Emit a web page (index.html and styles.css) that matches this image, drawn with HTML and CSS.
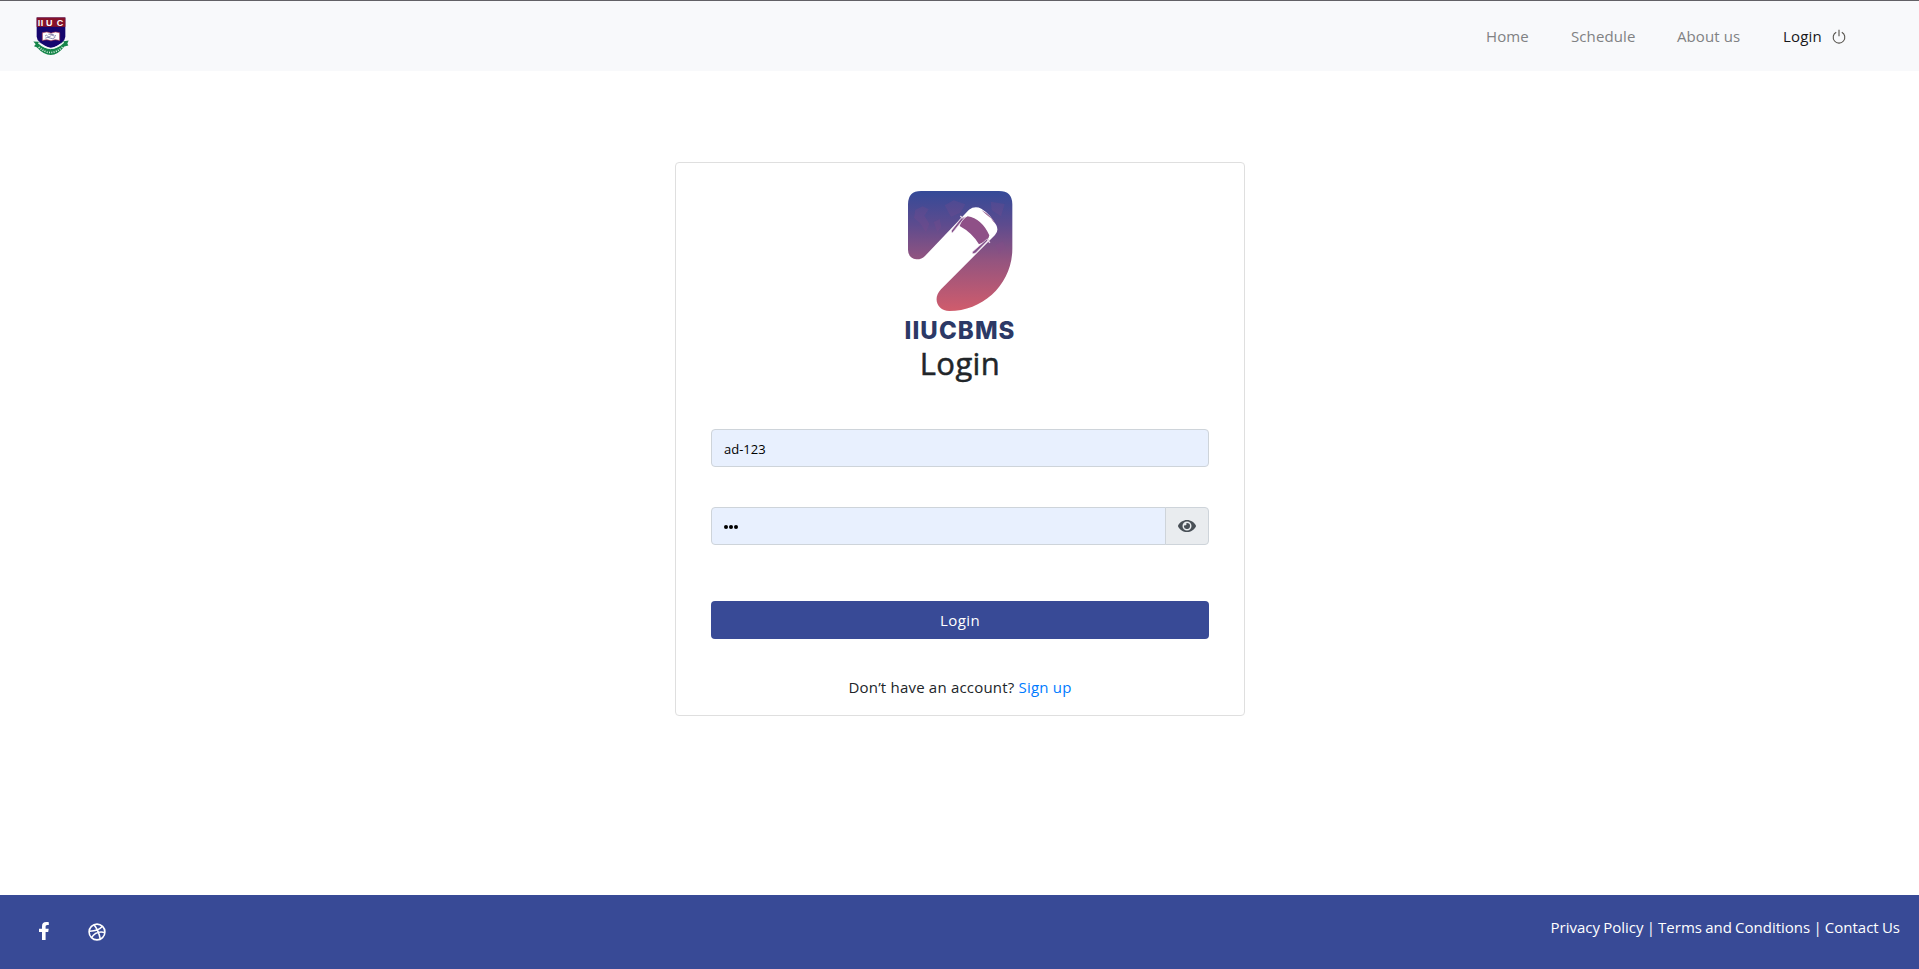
FILE: index.html
```
<!DOCTYPE html>
<html lang="en">
<head>
<meta charset="utf-8">
<title>Login</title>
<link rel="stylesheet" href="styles.css">
</head>
<body>
<header class="navbar">
  <svg class="crest" viewBox="0 0 108 116" aria-label="IIUC">
    <path d="M1 73l17 1 8 12q26 20 54 0l8-13 19-3-4 9 3 6-12 3q-38 50-83 2L3 87l5-6z" fill="#16864a"/>
    <path d="M11 1h86v58q0 18-43 35Q11 77 11 59z" fill="#16066e"/>
    <path d="M16 77q38 34 76-2" fill="none" stroke="#f4f7f6" stroke-width="4"/>
    <path d="M17 90q37 33 73-2" fill="none" stroke="#d9eee0" stroke-width="5" stroke-dasharray="3 4"/>
    <path d="M11 1h86v28H11z" fill="#85112a"/>
    <text class="crest-text" y="27" x="14 23 39 71">IIUC</text>
    <path d="M28 47q14-6 26 1 14-7 26-1v23q-14-5-26 1-12-6-26-1z" fill="#fff" stroke="#a43850" stroke-width="2"/>
    <path d="M36 57q4-6 8 0t8 0 8-2 9 0M37 63q8-5 15 0t15-3M46 51l16 1" fill="none" stroke="#55558d" stroke-width="2"/>
  </svg>
  <nav class="links">
    <a class="link home">Home</a>
    <a class="link schedule">Schedule</a>
    <a class="link about">About us</a>
    <a class="link active">Login</a>
    <svg class="power" viewBox="0 0 14 15"><path d="M4.200 3.200a5.800 5.800 0 1 0 5.600 0M7 .8v6.400" fill="none" stroke="#55524c" stroke-width="1.100"/></svg>
  </nav>
</header>
<main class="main">
  <form class="card">
    <svg class="logo" viewBox="80 60 318 364" aria-label="Bus logo">
      <defs>
        <linearGradient id="fade" x1="0" y1="0" x2="0" y2="1">
          <stop offset="0" stop-color="#344a98"/><stop offset=".28" stop-color="#5d4b8e"/>
          <stop offset=".58" stop-color="#94547f"/><stop offset="1" stop-color="#d05c6c"/>
        </linearGradient>
      </defs>
      <path d="M122 62H356Q396 62 396 102V235C396 340 310 422 207 422C172 422 155 385 182 357L344 194Q356 181 348 165Q330 131 303 115Q284 105 266 118L134 257Q123 268 108 267Q83 263 83 238V102Q83 62 122 62Z" fill="url(#fade)"/>
      <path d="M105 118l22-10 18 9-13 19 15 24-10 25-19-28-17-15zM193 105l27-15 35 12-15 25-28 13zM160 155l18-9 5 23-12 16zM331 94l42 7-11 37-28-18zM345 225l22-12 10 20-21 17z" fill="#8a4d8c" opacity=".2"/>
      <path d="M262 138Q304 145 327 195Q326 211 296 222Q275 187 238 167Q246 145 262 138Z" fill="#8f5087"/>
      <path d="M303 119q26 14 43 42q-8-7-14-17-12-9-29-25z" fill="#8f5087"/>
      <path d="M255 139l-39 49q-4-2-2-8l29-37zM326 207l-40 41q-12 5-10-3l43-38z" fill="#82508b" stroke="#f5e9f2" stroke-width="2"/>
      <path d="M247 144l-7-7M321 210l8 7" stroke="#e9d7e6" stroke-width="4"/>
    </svg>
    <div class="brand">IIUCBMS</div>
    <h2 class="title">Login</h2>
    <div class="field user">ad-123</div>
    <div class="group">
      <div class="field password"><i class="dot"></i><i class="dot"></i><i class="dot"></i></div>
      <div class="toggle">
        <svg class="eye" viewBox="0 0 576 512"><path fill="#495057" d="M572.500 241.400C518.300 135.600 410.900 64 288 64S57.700 135.600 3.500 241.400a32.400 32.400 0 0 0 0 29.200C57.700 376.400 165.100 448 288 448s230.300-71.600 284.500-177.400a32.400 32.400 0 0 0 0-29.200zM288 400a144 144 0 1 1 144-144 143.900 143.900 0 0 1-144 144zm0-240a95.300 95.300 0 0 0-25.300 3.800 47.900 47.900 0 0 1-66.900 66.900A95.800 95.800 0 1 0 288 160z"/></svg>
      </div>
    </div>
    <div class="submit">Login</div>
    <p class="register">Don’t have an account? <a class="signup">Sign up</a></p>
  </form>
</main>
<footer class="footer">
  <div class="social">
    <svg class="facebook" viewBox="0 0 10 18"><path d="M3 18V10H0V6.700h3V4.200C3 1.400 4.600 0 7.200 0 8.500 0 9.800.2 9.800.2V3H8.400C7 3 6.600 3.800 6.600 4.700v2h3.100L9.200 10H6.600v8z" fill="#fff"/></svg>
    <svg class="dribbble" viewBox="0 0 18 18" fill="none" stroke="#fff" stroke-width="1.600"><circle cx="9" cy="9" r="7.900"/><path d="M6 1.800q4.500 5.500 6.300 14.300M1.200 8.200q8.800.2 13.300-4.900M3.500 14.700q4.500-7.200 13.300-5.200"/></svg>
  </div>
  <div class="legal">Privacy Policy | Terms and Conditions | Contact Us</div>
</footer>
</body>
</html>
```
FILE: styles.css
```
* { box-sizing: border-box; }
body {
  margin: 0;
  height: 969px;
  display: flex;
  flex-direction: column;
  overflow: hidden;
  background: #fff;
  color: #212529;
  font: 15px/24px "Open Sans", "Noto Sans", sans-serif;
}
.navbar {
  height: 71px;
  padding: 0 73px 0 33px;
  display: flex;
  align-items: center;
  justify-content: space-between;
  background: #f8f9fb;
  border-top: 1px solid #626166;
}
.crest { width: 36px; height: 39px; margin-top: 1px; }
.crest-text { font: 700 27px "Liberation Sans", sans-serif; fill: #fff; }
.links { display: flex; align-items: center; }
.link { color: #808183; white-space: nowrap; letter-spacing: .1px; }
.home { width: 85px; }
.schedule { width: 106px; }
.about { width: 106px; }
.active { width: 49px; color: #17181a; letter-spacing: .2px; }
.power { width: 14px; height: 15px; }
.main { flex: 1; padding-top: 91px; }
.card {
  width: 570px;
  height: 554px;
  margin: 0 auto 0 675px;
  padding: 27px 35px 0;
  display: flex;
  flex-direction: column;
  align-items: center;
  border: 1px solid #dfdfdf;
  border-radius: 4px;
}
.logo { width: 106px; height: 122px; margin-right: 1px; }
.brand {
  margin-top: 6px;
  color: #2c3966;
  font: 800 24px/26px Inter, sans-serif;
  letter-spacing: 1.1px;
  white-space: nowrap;
}
.title {
  margin: 0 0 46px;
  font-size: 31px;
  font-weight: 500;
  line-height: 39px;
  letter-spacing: .4px;
  -webkit-text-stroke: .5px #212529;
}
.field {
  width: 100%;
  height: 38px;
  padding: 0 12px;
  display: flex;
  align-items: center;
  background: #e8f0fe;
  border: 1px solid #ced4da;
  border-radius: 4px;
  color: #000;
}
.user { font-size: 13px; padding-top: 2px; }
.group { width: 100%; margin-top: 40px; display: flex; }
.password { flex: 1; gap: 1px; border-radius: 4px 0 0 4px; padding-top: 2px; }
.dot { width: 4px; height: 4px; border-radius: 50%; background: #000; }
.toggle {
  width: 44px;
  height: 38px;
  margin-left: -1px;
  display: flex;
  align-items: center;
  justify-content: center;
  background: #e9ecef;
  border: 1px solid #ced4da;
  border-radius: 0 4px 4px 0;
}
.eye { width: 18px; height: 16px; }
.submit {
  width: 100%;
  height: 38px;
  margin-top: 56px;
  line-height: 38px;
  letter-spacing: .4px;
  text-align: center;
  color: #fff;
  background: #384a96;
  border-radius: 4px;
}
.register { margin: 36px 0 0; white-space: nowrap; letter-spacing: .2px; }
.signup { color: #007bff; }
.footer {
  height: 74px;
  padding: 0 19px 0 39px;
  display: flex;
  justify-content: space-between;
  background: #384a96;
  color: #fff;
}
.social { display: flex; gap: 39px; padding-top: 27px; }
.facebook { width: 10px; height: 18px; }
.dribbble { width: 18px; height: 18px; margin-top: 1px; }
.legal { padding-top: 20px; white-space: nowrap; word-spacing: -.7px; }
```
